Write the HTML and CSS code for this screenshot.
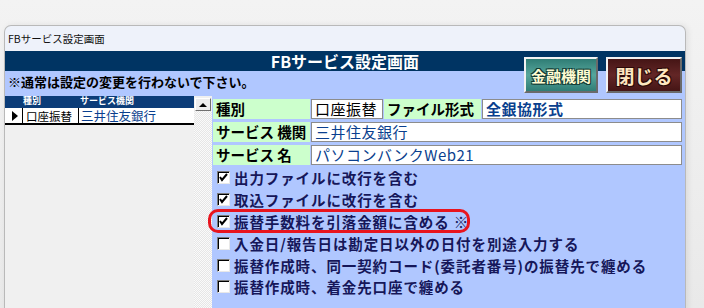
FILE: index.html
```html
<!DOCTYPE html>
<html lang="ja">
<head>
    <meta charset="UTF-8">
    <title>FBサービス設定画面</title>
    <link rel="stylesheet" href="styles.css">
</head>
<body>

<div class="window">
    <div class="titlebar">FBサービス設定画面</div>

    <div class="head">
        <div class="banner">FBサービス設定画面</div>
        <div class="notice">※通常は設定の変更を行わないで下さい。</div>
        <div class="head-buttons">
            <button class="btn btn-bank">金融機関</button>
            <button class="btn btn-close">閉じる</button>
        </div>
    </div>

    <div class="main">
        <div class="list">
            <div class="grid">
                <div class="grid-head">
                    <span class="c0"></span>
                    <span class="c1">種別</span>
                    <span class="c2">サービス機関</span>
                </div>
                <div class="grid-row">
                    <span class="c0"><i class="arrow"></i></span>
                    <span class="c1">口座振替</span>
                    <span class="c2 blue">三井住友銀行</span>
                </div>
            </div>
            <div class="scrollbar">
                <div class="sb-up"><i></i></div>
                <div class="sb-track"></div>
            </div>
        </div>

        <div class="detail">
            <div class="field-row">
                <div class="label">種別</div>
                <div class="value short">口座振替</div>
                <div class="label">ファイル形式</div>
                <div class="value grow blue bold">全銀協形式</div>
            </div>
            <div class="field-row">
                <div class="label">サービス 機関</div>
                <div class="value grow blue">三井住友銀行</div>
            </div>
            <div class="field-row">
                <div class="label">サービス 名</div>
                <div class="value grow blue">パソコンバンクWeb21</div>
            </div>

            <div class="options">
                <label class="opt"><span class="box checked"></span>出力ファイルに改行を含む</label>
                <label class="opt"><span class="box checked"></span>取込ファイルに改行を含む</label>
                <label class="opt"><span class="box checked"></span>振替手数料を引落金額に含める ※</label>
                <label class="opt"><span class="box"></span>入金日/報告日は勘定日以外の日付を別途入力する</label>
                <label class="opt"><span class="box"></span>振替作成時、同一契約コード(委託者番号)の振替先で纏める</label>
                <label class="opt"><span class="box"></span>振替作成時、着金先口座で纏める</label>
            </div>

            <div class="highlight"></div>
        </div>
    </div>
</div>

</body>
</html>
```

FILE: styles.css
```css
html, body { margin: 0; height: 100%; overflow: hidden; }
body {
  background: linear-gradient(#f3f3f3, #e9e9e9);
  font-family: "Noto Sans CJK JP", "Noto Sans", sans-serif;
}

.window {
  margin: 25px 0 0 4px;
  width: 680px;
  height: 300px;
  border: 1px solid #b9b9b9;
  border-bottom: none;
  border-radius: 7px 7px 0 0;
  background: #eef2fa;
  box-shadow: 2px 0 6px rgba(0,0,0,0.08);
  overflow: hidden;
}

.titlebar {
  height: 25px;
  line-height: 25px;
  padding-left: 3px;
  font-size: 10.5px;
  color: #111;
}

/* header band */
.head { position: relative; }
.banner {
  height: 20px;
  line-height: 20px;
  background: #003463;
  color: #fff;
  font-size: 16px;
  font-weight: bold;
  text-align: center;
}
.notice {
  height: 25px;
  line-height: 22px;
  padding-left: 3px;
  background: #b0c7ff;
  font-size: 13px;
  font-weight: bold;
  color: #000;
}
.head-buttons {
  position: absolute;
  top: 6px;
  right: 3px;
  display: flex;
  gap: 8px;
}
.btn {
  height: 36px;
  padding: 0;
  border: 2px solid;
  border-color: #f2f2f2 #6a6a6a #6a6a6a #f2f2f2;
  font-family: "Noto Sans CJK JP", sans-serif;
  font-weight: bold;
  cursor: pointer;
}
.btn-bank {
  width: 74px;
  font-size: 15px;
  color: #fffbd2;
  background: linear-gradient(#2f7d75, #57a69c 50%, #2f7d75);
  text-shadow: 1px 1px 0 #123a34, -1px -1px 0 #123a34, 1px -1px 0 #123a34, -1px 1px 0 #123a34;
}
.btn-close {
  width: 76px;
  font-size: 19px;
  color: #fde6c0;
  background: linear-gradient(#451515, #632626 50%, #451515);
  text-shadow: 1px 1px 0 #2a0808, -1px -1px 0 #2a0808, 1px -1px 0 #2a0808, -1px 1px 0 #2a0808;
}

/* body */
.main { display: flex; height: 230px; }

.list { display: flex; width: 207px; background: #f0f0f0; }
.grid { width: 189px; }
.grid-head, .grid-row { display: flex; }
.grid-head {
  height: 12px;
  line-height: 10px;
  background: #0b3c78;
  color: #fff;
  font-size: 9px;
  font-weight: bold;
}
.grid-row {
  height: 15px;
  line-height: 16px;
  background: #fff;
  border-bottom: 2px solid #000;
  font-size: 11.5px;
}
.c0 { width: 17px; }
.c1 { width: 56px; padding-left: 3px; box-sizing: border-box; white-space: nowrap; }
.c2 { flex: 1; padding-left: 2px; white-space: nowrap; }
.grid-head .c1 { padding-left: 1px; }
.grid-row .c2 { font-size: 12.5px; }
.grid-row .c0 { border-right: 1px solid #000; display: flex; align-items: center; justify-content: center; }
.grid-row .c1 { border-right: 1px solid #000; }
.arrow {
  width: 0; height: 0;
  border-top: 5px solid transparent;
  border-bottom: 5px solid transparent;
  border-left: 6px solid #000;
  margin-left: 3px;
}
.blue { color: #0a3f8e; }
.bold { font-weight: bold; }

.scrollbar { width: 18px; display: flex; flex-direction: column; }
.sb-up {
  height: 11px;
  margin: 2px 1px 0 1px;
  border: 1px solid;
  border-color: #fff #707070 #707070 #fff;
  background: #ececec;
  display: flex;
  align-items: center;
  justify-content: center;
}
.sb-up i {
  width: 0; height: 0;
  border-left: 4px solid transparent;
  border-right: 4px solid transparent;
  border-bottom: 4px solid #000;
}
.sb-track {
  flex: 1;
  background: repeating-conic-gradient(#fafafa 0 25%, #e6e6e6 0 50%) 0 0 / 2px 2px;
}

.detail {
  position: relative;
  flex: 1;
  background: #b0c7ff;
  padding: 3px 3px 0 1px;
}
.field-row {
  display: flex;
  height: 20px;
  gap: 1px;
  margin-bottom: 3px;
}
.label {
  width: 97px;
  background: #ccffcc;
  font-size: 14.5px;
  font-weight: bold;
  line-height: 20px;
  padding-left: 3px;
  box-sizing: border-box;
  color: #000;
  white-space: pre;
}
.value {
  background: #fff;
  border: 1px solid #8c8c8c;
  font-size: 15px;
  line-height: 18px;
  padding-left: 3px;
  letter-spacing: 0.5px;
}
.value.short { width: 67px; }
.value.grow { flex: 1; }

.options { margin-top: -1px; }
.opt {
  display: flex;
  align-items: center;
  height: 21.8px;
  padding-left: 4px;
  gap: 4px;
  font-size: 14.5px;
  font-weight: bold;
  letter-spacing: 0.9px;
  color: #16175a;
  white-space: pre;
}
.box {
  width: 13px;
  height: 13px;
  box-sizing: border-box;
  background: #fff;
  border: 1px solid;
  border-color: #7a7a7a #e8e8e8 #e8e8e8 #7a7a7a;
  box-shadow: inset 1px 1px 0 #000;
  flex-shrink: 0;
}
.box.checked {
  background: #fff url("data:image/svg+xml,%3Csvg xmlns='http://www.w3.org/2000/svg' width='11' height='11'%3E%3Cpath d='M2 5 L4 8 L9 2' fill='none' stroke='%23000' stroke-width='2'/%3E%3C/svg%3E") center / 11px 11px no-repeat;
}

.highlight {
  position: absolute;
  left: -4px;
  top: 113px;
  width: 262px;
  height: 24px;
  box-sizing: border-box;
  border: 3px solid #e8141e;
  border-radius: 10px;
}
```
